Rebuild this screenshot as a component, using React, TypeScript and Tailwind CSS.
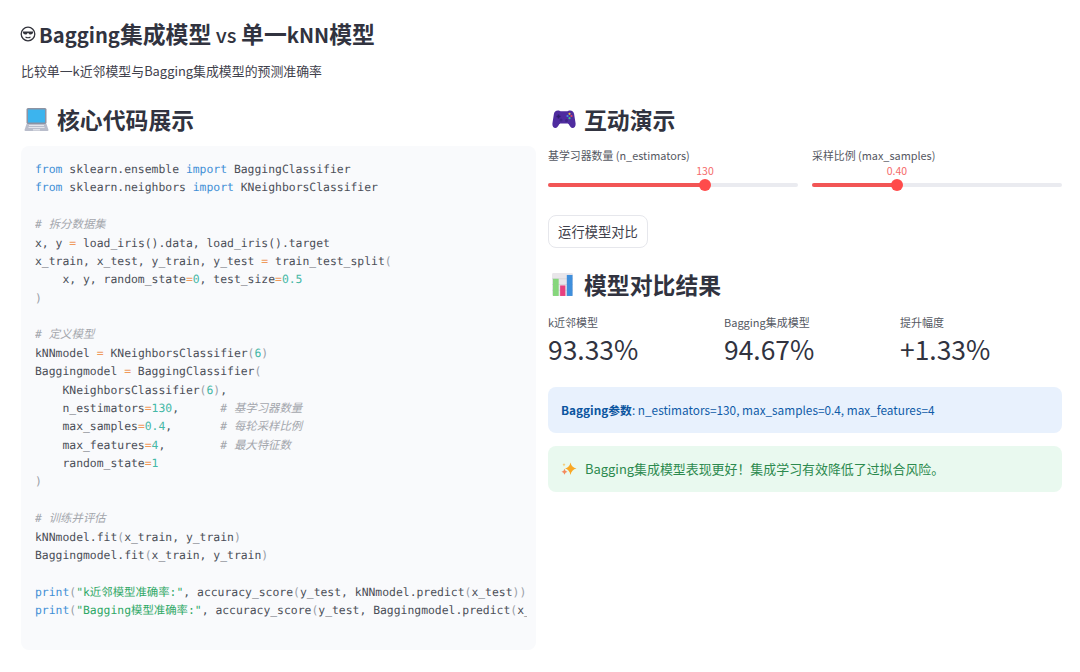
import React from "react";

const K = ({ c }: { c: string }) => <span className="text-[#3f8fd6]">{c}</span>;
const O = ({ c }: { c: string }) => <span className="text-[#ef9a5c]">{c}</span>;
const N = ({ c }: { c: string }) => <span className="text-[#45b8a6]">{c}</span>;
const P = ({ c }: { c: string }) => <span className="text-[#9aa0a8]">{c}</span>;
const S = ({ c }: { c: string }) => <span className="text-[#2fa866]">{c}</span>;
const C = ({ c }: { c: string }) => <span className="text-[#a4a7ad] italic">{c}</span>;

const lines: React.ReactNode[] = [
  <><K c="from" /> sklearn.ensemble <K c="import" /> BaggingClassifier</>,
  <><K c="from" /> sklearn.neighbors <K c="import" /> KNeighborsClassifier</>,
  "",
  <C c="# 拆分数据集" />,
  <>x, y <O c="=" /> load_iris().data, load_iris().target</>,
  <>x_train, x_test, y_train, y_test <O c="=" /> train_test_split<P c="(" /></>,
  <>{"    "}x, y, random_state<O c="=" /><N c="0" />, test_size<O c="=" /><N c="0.5" /></>,
  <P c=")" />,
  "",
  <C c="# 定义模型" />,
  <>kNNmodel <O c="=" /> KNeighborsClassifier<P c="(" /><N c="6" /><P c=")" /></>,
  <>Baggingmodel <O c="=" /> BaggingClassifier<P c="(" /></>,
  <>{"    "}KNeighborsClassifier<P c="(" /><N c="6" /><P c=")" />,</>,
  <>{"    "}n_estimators<O c="=" /><N c="130" />,{"      "}<C c="# 基学习器数量" /></>,
  <>{"    "}max_samples<O c="=" /><N c="0.4" />,{"       "}<C c="# 每轮采样比例" /></>,
  <>{"    "}max_features<O c="=" /><N c="4" />,{"        "}<C c="# 最大特征数" /></>,
  <>{"    "}random_state<O c="=" /><N c="1" /></>,
  <P c=")" />,
  "",
  <C c="# 训练并评估" />,
  <>kNNmodel.fit<P c="(" />x_train, y_train<P c=")" /></>,
  <>Baggingmodel.fit<P c="(" />x_train, y_train<P c=")" /></>,
  "",
  <><K c="print" /><P c="(" /><S c={'"k近邻模型准确率:"'} />, accuracy_score<P c="(" />y_test, kNNmodel.predict<P c="(" />x_test<P c=")))" /></>,
  <><K c="print" /><P c="(" /><S c={'"Bagging模型准确率:"'} />, accuracy_score<P c="(" />y_test, Baggingmodel.predict<P c="(" />x_test<P c=")))" /></>,
];

const Laptop = () => (
  <svg width="25" height="25" viewBox="0 0 25 25" className="shrink-0">
    <rect x="2.5" y="1" width="20" height="16" rx="1.5" fill="#8d93a3" />
    <rect x="4" y="2.5" width="17" height="13" fill="#3cb4ee" />
    <path d="M2.5 17h20l2 6a1 1 0 0 1-1 1H1.5a1 1 0 0 1-1-1z" fill="#b9bdcb" />
    <path d="M5 18.5h15M4.500 20.500h16" stroke="#e4e5ec" strokeWidth="1" />
    <rect x="9" y="22" width="7" height="1.500" fill="#dedfe6" />
  </svg>
);

const Gamepad = () => (
  <svg width="24" height="20" viewBox="0 0 24 20" className="shrink-0">
    <path d="M6 1.500C3.500 1.500 2.400 3 1.900 5L.4 14.500C.1 17 1.500 19 3.400 19c1.600 0 2.600-1.500 3.400-3 .5-1 1-1.500 2.200-1.500h6c1.200 0 1.700.5 2.200 1.500.8 1.500 1.800 3 3.400 3 1.900 0 3.300-2 3-4.500L22.100 5c-.5-2-1.600-3.500-4.100-3.500-1.500 0-2.300.8-3.500.8h-5C8.300 2.300 7.500 1.500 6 1.500z" fill="#4f2c9f" />
    <path d="M6.500 5.500v4M4.500 7.500h4" stroke="#2f1d6e" strokeWidth="1.600" />
    <circle cx="17.500" cy="4.800" r="1.100" fill="#e8c23c" />
    <circle cx="15.500" cy="7" r="1.100" fill="#3f8fe8" />
    <circle cx="19.500" cy="7" r="1.100" fill="#e0455f" />
    <circle cx="17.500" cy="9.200" r="1.100" fill="#3cc48a" />
    <circle cx="9" cy="11" r="1.500" fill="#3d2585" />
    <circle cx="14.500" cy="11.500" r="1.500" fill="#3d2585" />
  </svg>
);

const Chart = () => (
  <svg width="21" height="23" viewBox="0 0 22 24" className="shrink-0">
    <rect x="0" y="0" width="22" height="24" rx="1.500" fill="#e9e6ea" />
    <path d="M0 6h22M0 12h22M0 18h22" stroke="#d4d2d8" strokeWidth=".8" />
    <rect x="1" y="6" width="6" height="18" fill="#86d67c" />
    <rect x="8.500" y="13" width="5.500" height="11" fill="#e8407f" />
    <rect x="15.500" y="2" width="6" height="22" fill="#3f8fdc" />
  </svg>
);

const Sparkles = () => (
  <svg width="16" height="16" viewBox="0 0 16 16" className="shrink-0">
    <path d="M9.500 1.500 Q10.500 6.500 15.500 7.500 Q10.500 8.500 9.500 14 Q8.500 8.500 4 7.500 Q8.500 6.500 9.500 1.500z" fill="#f9a825" />
    <path d="M3.500 7.800 Q4 10.300 6.500 10.800 Q4 11.300 3.500 13.800 Q3 11.300 .5 10.800 Q3 10.300 3.500 7.800z" fill="#f48a5c" />
    <path d="M3 2 Q3.300 3.500 4.500 3.800 Q3.300 4.100 3 5.500 Q2.700 4.100 1.500 3.800 Q2.700 3.500 3 2z" fill="#f6c667" />
  </svg>
);

const Face = () => (
  <svg width="16" height="16" viewBox="0 0 16 16" className="shrink-0">
    <circle cx="8" cy="8" r="6.800" fill="none" stroke="#33343c" strokeWidth="1.300" />
    <path d="M3 5.500h10v1.200q-.3 1.800-2.400 1.800-1.900 0-2.200-1.500h-.8q-.3 1.500-2.200 1.500-2.100 0-2.400-1.800z" fill="#33343c" />
    <path d="M5.500 11q2.500 1.500 5 0" fill="none" stroke="#33343c" strokeWidth="1.100" />
  </svg>
);

const Heading = ({ icon, text, gap }: { icon: React.ReactNode; text: string; gap: string }) => (
  <h2 className={`flex items-center h-[34px] ${gap} text-[22.850px] font-bold text-[#31333f] leading-none`}>
    {icon}
    <span>{text}</span>
  </h2>
);

const Slider = ({ label, value, pct }: { label: string; value: string; pct: string }) => (
  <div className="flex-1">
    <div className="text-[10.900px] leading-[16px] text-[#555862]">{label}</div>
    <div className="relative mt-[20px] h-[4px] rounded-full bg-[#eaebf0]">
      <div className="h-full rounded-full bg-[#f25555]" style={{ width: pct }} />
      <div className="absolute top-[-4px] w-[12px] h-[12px] -ml-[6px] rounded-full bg-[#ff4b4b]" style={{ left: pct }} />
      <div className="absolute top-[-19px] -translate-x-1/2 text-[10.500px] leading-[14px] text-[#f56a6a]" style={{ left: pct }}>{value}</div>
    </div>
  </div>
);

const Metric = ({ label, value }: { label: string; value: string }) => (
  <div className="w-[176px] shrink-0">
    <div className="text-[11px] leading-[16px] text-[#555862]">{label}</div>
    <div className="text-[26.400px] leading-[38px] text-[#31333f]">{value}</div>
  </div>
);

export default function App() {
  return (
    <div className="w-[1080px] h-[672px] overflow-hidden bg-white px-[21px] pt-[17px] font-['Noto_Sans_CJK_SC','Noto_Sans',sans-serif] text-[#31333f]">
      <h1 className="flex items-center gap-[3px] -ml-[1px] h-[34px] text-[22.850px] font-semibold leading-none text-[#31333f]">
        <Face />
        <span><span className="text-[20.200px]">Bagging</span>集成模型<span className="text-[20.200px] font-medium"> vs </span>单一<span className="text-[20.200px]">kNN</span>模型</span>
      </h1>
      <p className="mt-[10px] text-[12.900px] leading-[20px] text-[#3f414c]">比较单一k近邻模型与Bagging集成模型的预测准确率</p>
      <div className="mt-[21px] grid grid-cols-[515px_514px] gap-x-[12px]">
        <section>
          <Heading icon={<Laptop />} text="核心代码展示" gap="gap-[8px] pl-[3px]" />
          <div className="mt-[10px] h-[504px] rounded-[8px] bg-[#f9fafc] pl-[14px] pr-[9px] pt-[14px]">
            <pre className="overflow-hidden font-['DejaVu_Sans_Mono','Noto_Sans_CJK_SC',monospace] text-[11.400px] leading-[18.375px] text-[#4b4f58] [text-rendering:geometricPrecision]">
              {lines.map((l, i) => (
                <div key={i} className="h-[18.375px] whitespace-pre">{l === "" ? " " : l}</div>
              ))}
            </pre>
          </div>
        </section>
        <section>
          <Heading icon={<Gamepad />} text="互动演示" gap="gap-[8px] pl-[4px]" />
          <div className="mt-[11px] flex gap-[14px]">
            <Slider label="基学习器数量 (n_estimators)" value="130" pct="62.800%" />
            <Slider label="采样比例 (max_samples)" value="0.40" pct="34%" />
          </div>
          <button className="mt-[28px] block h-[33px] w-[100px] rounded-[8px] border border-[#e6e7ec] bg-white text-[13.300px] text-[#3f414c]">运行模型对比</button>
          <div className="mt-[19px]">
            <Heading icon={<Chart />} text="模型对比结果" gap="gap-[11px] pl-[4px]" />
          </div>
          <div className="mt-[13px] flex">
            <Metric label="k近邻模型" value="93.33%" />
            <Metric label="Bagging集成模型" value="94.67%" />
            <Metric label="提升幅度" value="+1.33%" />
          </div>
          <div className="mt-[19px] flex h-[46px] items-center rounded-[8px] bg-[#e8f1fd] px-[13px] text-[11.800px] text-[#0f5ca8]">
            <span><b className="font-bold text-[#0b559f]">Bagging参数</b>: n_estimators=130, max_samples=0.4, max_features=4</span>
          </div>
          <div className="mt-[13px] flex h-[46px] items-center gap-[8px] rounded-[8px] bg-[#e9f9ef] px-[13px] text-[12.930px] text-[#2c8a4e]">
            <Sparkles />
            <span>Bagging集成模型表现更好！集成学习有效降低了过拟合风险。</span>
          </div>
        </section>
      </div>
    </div>
  );
}
